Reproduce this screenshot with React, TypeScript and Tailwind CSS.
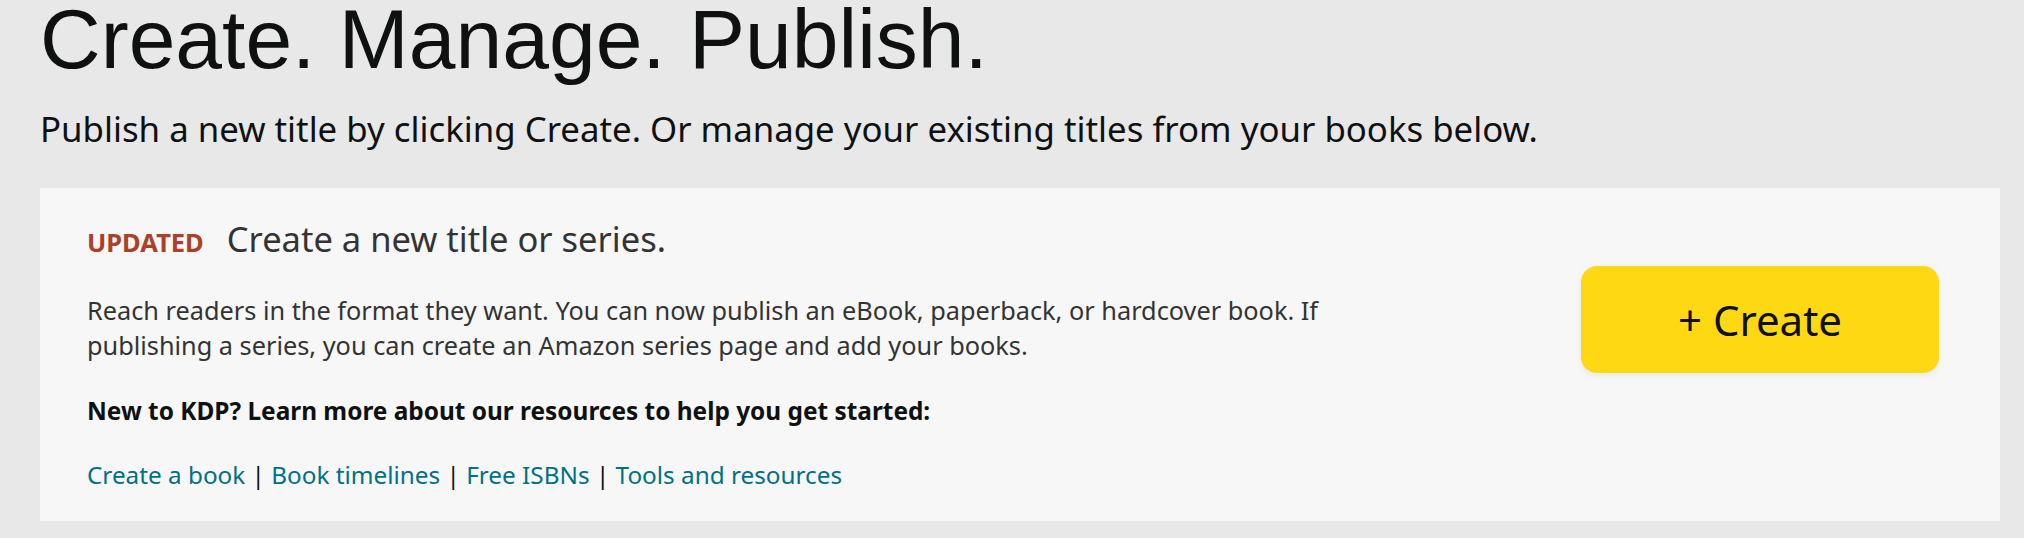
const resources = ["Create a book", "Book timelines", "Free ISBNs", "Tools and resources"];

export default function App() {
  return (
    <div className="min-h-[538px] bg-[#e8e8e8] pb-[18px] font-['Noto_Sans',sans-serif] text-[#0f1111]">
      <header className="pl-[40px]">
        <h1 className="font-['Liberation_Sans',Arial,sans-serif] text-[84px] font-normal leading-[78px] text-[#0f1111]">
          Create. Manage. Publish.
        </h1>
        <p className="mt-[29px] text-[34.8px] leading-[44px]">
          Publish a new title by clicking Create. Or manage your existing titles from your books below.
        </p>
      </header>

      <div className="mt-[37px] pl-[40px] pr-[24px]">
        <section className="flex items-start justify-between bg-[#f7f7f7] pb-[29px] pl-[47px] pr-[61px] pt-[29px]">
          <div>
            <div className="flex items-baseline gap-[23px]">
              <span className="text-[25.5px] font-bold leading-[44px] text-[#ab4129]">UPDATED</span>
              <h2 className="text-[34.5px] leading-[44px] text-[#333333]">Create a new title or series.</h2>
            </div>
            <p className="mt-[29px] max-w-[1270px] text-[25.3px] leading-[35px] text-[#333333]">
              Reach readers in the format they want. You can now publish an eBook, paperback, or hardcover book. If
              publishing a series, you can create an Amazon series page and add your books.
            </p>
            <p className="mt-[30px] text-[24.4px] font-bold leading-[35px] text-[#0f1111]">
              New to KDP? Learn more about our resources to help you get started:
            </p>
            <div className="mt-[29px] text-[24.3px] leading-[35px]">
              {resources.map((label, i) => (
                <span key={label}>
                  {i > 0 && <span className="text-[#0f1111]"> | </span>}
                  <a href="#" className="text-[#007185] hover:underline">
                    {label}
                  </a>
                </span>
              ))}
            </div>
          </div>

          <button className="mt-[49px] flex h-[107px] w-[358px] shrink-0 items-center justify-center rounded-[16px] bg-[#ffd814] text-[42px] leading-none text-[#0f1111] shadow-[0_2px_5px_0_rgba(213,217,217,0.5)]">
            + Create
          </button>
        </section>
      </div>
    </div>
  );
}
